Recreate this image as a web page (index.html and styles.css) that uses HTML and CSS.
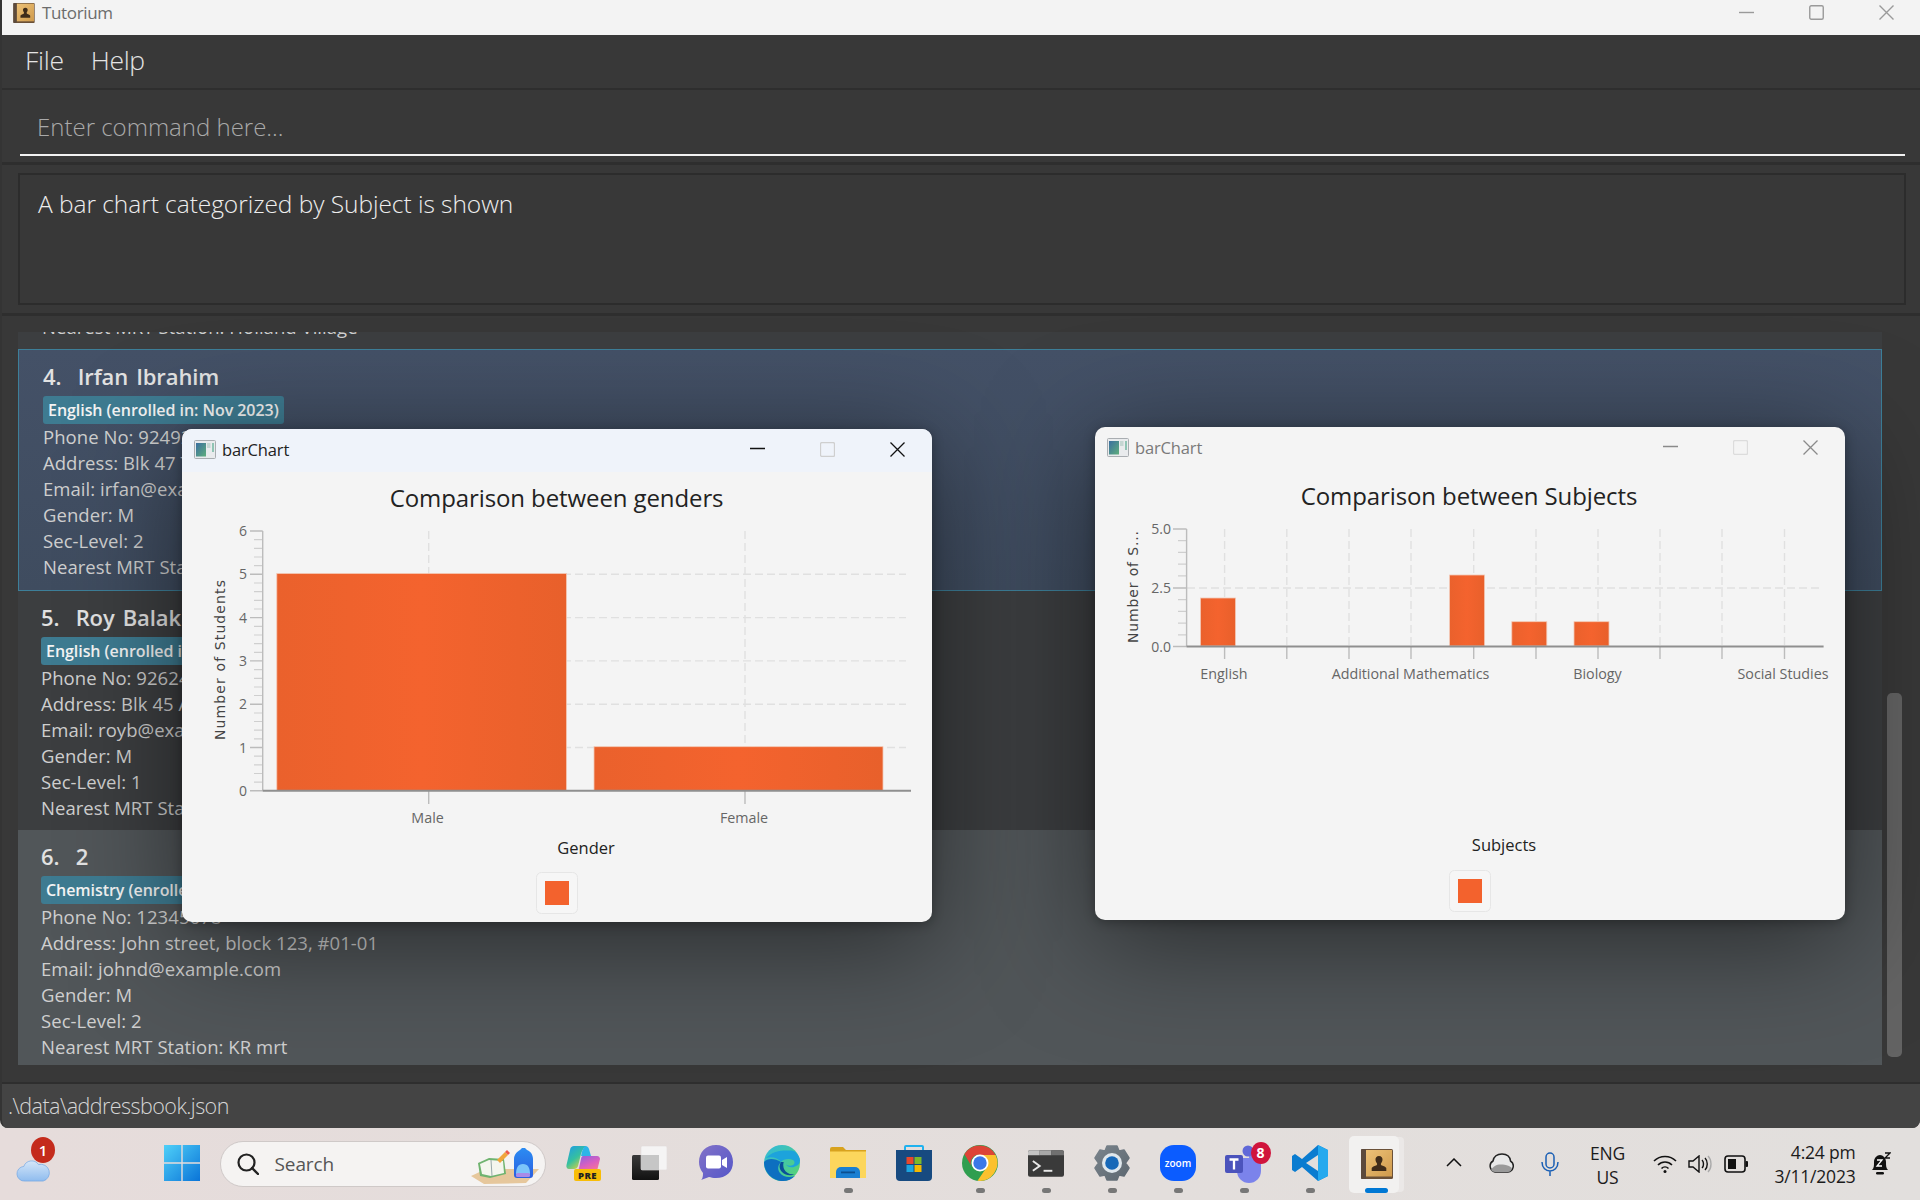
FILE: index.html
```html
<!DOCTYPE html>
<html lang="en">
<head>
<meta charset="utf-8">
<title>Tutorium</title>
<link rel="stylesheet" href="styles.css">
</head>
<body>
<svg class="defs" width="0" height="0" aria-hidden="true">
  <defs>
    <linearGradient id="barFill" x1="0" x2="1" y1="0" y2="0">
      <stop offset="0" stop-color="#ea612c"/><stop offset=".5" stop-color="#f4632e"/><stop offset="1" stop-color="#e8602b"/>
    </linearGradient>
    <linearGradient id="bookFill" x1="0" x2="1" y1="0" y2="1">
      <stop offset="0" stop-color="#edc278"/><stop offset="1" stop-color="#cf9a4c"/>
    </linearGradient>
    <linearGradient id="winBlock" x1="0" x2="1" y1="0" y2="1">
      <stop offset="0" stop-color="#3b6ea0"/><stop offset="1" stop-color="#5fae7c"/>
    </linearGradient>
    <symbol id="book" viewBox="0 0 32 30">
      <rect x="0" y="0" width="32" height="30" rx="1.500" fill="#6a5038"/>
      <rect x="5" y="1" width="26" height="26.500" fill="url(#bookFill)"/>
      <rect x="0" y="0" width="5" height="30" rx="1" fill="#5c4a3c"/>
      <path d="M18 7c2.400 0 3.800 1.700 3.500 4-.2 1.500-.9 2.600-1.500 3.400-.3.900 0 1.600 1 2.100 1.900.8 3.600 1.100 4.300 2.500v3H10.700v-3c.7-1.400 2.400-1.700 4.300-2.500 1-.5 1.300-1.200 1-2.100-.6-.8-1.300-1.900-1.500-3.400C14.200 8.700 15.600 7 18 7z" fill="#3f2c1a"/>
    </symbol>
    <symbol id="winIcon" viewBox="0 0 22 19">
      <rect x=".5" y=".5" width="21" height="18" rx="1" fill="#e9ebed" stroke="#a9adb1"/>
      <rect x="2" y="3" width="10" height="13.500" fill="url(#winBlock)"/>
      <rect x="13" y="3" width="3.500" height="5" fill="#c4d6d2"/>
      <rect x="18" y="3" width="2" height="9" fill="#8fc4b4"/>
    </symbol>
  </defs>
</svg>

<main class="app">
  <header class="titlebar">
    <svg class="titlebar-icon"><use href="#book"/></svg>
    <span class="titlebar-name">Tutorium</span>
    <div class="wincontrols">
      <svg class="wc" viewBox="0 0 15 15"><path d="M0 7.500h15"/></svg>
      <svg class="wc" viewBox="0 0 15 15"><rect x=".75" y=".75" width="13.500" height="13.500" rx="1.500"/></svg>
      <svg class="wc" viewBox="0 0 15 15"><path d="M.5.500l14 14M14.500.500l-14 14"/></svg>
    </div>
  </header>

  <nav class="menubar"><span>File</span><span>Help</span></nav>

  <section class="command">
    <div class="command-input">Enter command here...</div>
  </section>

  <section class="result">
    <div class="result-box">A bar chart categorized by Subject is shown</div>
  </section>

  <section class="listpanel">
    <div class="cards">
      <div class="stripe"><div class="line stripe-line">Nearest MRT Station: Holland Village</div></div>

      <article class="card card-selected">
        <div class="name">4.&nbsp;&nbsp;Irfan Ibrahim</div>
        <div class="tag">English (enrolled in: Nov 2023)</div>
        <div class="line">Phone No: 92492021</div>
        <div class="line">Address: Blk 47 Tampines Street 20, #17-35</div>
        <div class="line">Email: irfan@example.com</div>
        <div class="line">Gender: M</div>
        <div class="line">Sec-Level: 2</div>
        <div class="line">Nearest MRT Station: Tampines</div>
      </article>

      <article class="card card-odd">
        <div class="name">5.&nbsp;&nbsp;Roy Balakrishnan</div>
        <div class="tag">English (enrolled in: Nov 2023)</div>
        <div class="line">Phone No: 92624417</div>
        <div class="line">Address: Blk 45 Aljunied Street 85, #11-31</div>
        <div class="line">Email: royb@example.com</div>
        <div class="line">Gender: M</div>
        <div class="line">Sec-Level: 1</div>
        <div class="line">Nearest MRT Station: Aljunied</div>
      </article>

      <article class="card card-even">
        <div class="name">6.&nbsp;&nbsp;2</div>
        <div class="tag">Chemistry (enrolled in: Nov 2023)</div>
        <div class="line">Phone No: 12345678</div>
        <div class="line">Address: John street, block 123, #01-01</div>
        <div class="line">Email: johnd@example.com</div>
        <div class="line">Gender: M</div>
        <div class="line">Sec-Level: 2</div>
        <div class="line">Nearest MRT Station: KR mrt</div>
      </article>
    </div>
    <div class="scrolltrack"><div class="scrollthumb"></div></div>
  </section>

  <footer class="statusbar">.\data\addressbook.json</footer>
</main>

<section class="chartwin chartwin-active">
  <div class="chart-titlebar">
    <svg class="chart-icon"><use href="#winIcon"/></svg>
    <span class="chart-name">barChart</span>
    <div class="chart-controls">
      <svg class="cc" viewBox="0 0 15 15"><path d="M0 6.500h15"/></svg>
      <svg class="cc cc-dim" viewBox="0 0 15 15"><rect x=".5" y=".5" width="14" height="14" rx="1.500"/></svg>
      <svg class="cc" viewBox="0 0 15 15"><path d="M.5.500l14 14M14.500.500l-14 14"/></svg>
    </div>
  </div>
  <svg class="plot" viewBox="0 0 750 450">
    <text class="t-title" x="374.600" y="35">Comparison between genders</text>
    <g class="grid">
      <path d="M246.700 59V102M563 59V275M381 102.300H724M381 145.600H724M381 188.900H724M381 232.200H724M381 275.500H724"/>
    </g>
    <rect class="bar" x="94.800" y="101.500" width="289.700" height="217"/>
    <rect class="bar" x="412" y="274.700" width="289" height="43.800"/>
    <path class="minor" d="M72 67.700h8M72 76.300h8M72 85h8M72 93.700h8M72 111h8M72 119.600h8M72 128.300h8M72 137h8M72 154.300h8M72 163h8M72 171.600h8M72 180.300h8M72 197.600h8M72 206.300h8M72 215h8M72 223.500h8M72 241h8M72 249.500h8M72 258.200h8M72 266.800h8M72 284.200h8M72 292.800h8M72 301.500h8M72 310.100h8"/>
    <path class="major" d="M68 59h12.700M68 102.300h12.700M68 145.600h12.700M68 188.900h12.700M68 232.200h12.700M68 275.500h12.700M68 318.800h12.700M80.700 59V319M246.700 319V332M563 319V332"/>
    <path class="axis" d="M80.700 318.800H729"/>
    <g class="t-ytick">
      <text x="65" y="64">6</text><text x="65" y="107">5</text><text x="65" y="150.600">4</text><text x="65" y="194">3</text><text x="65" y="237">2</text><text x="65" y="280.500">1</text><text x="65" y="324">0</text>
    </g>
    <g class="t-xtick">
      <text x="245.600" y="351">Male</text><text x="562" y="351">Female</text>
    </g>
    <text class="t-axis" x="404" y="382">Gender</text>
    <text class="t-yaxis" transform="translate(42.500 188) rotate(-90)" textLength="160" lengthAdjust="spacing">Number of Students</text>
    <rect class="legend-box" x="354.500" y="400.500" width="41" height="41" rx="5"/>
    <rect class="legend-swatch" x="363" y="409" width="24" height="24"/>
  </svg>
</section>

<section class="chartwin chartwin-inactive">
  <div class="chart-titlebar">
    <svg class="chart-icon"><use href="#winIcon"/></svg>
    <span class="chart-name">barChart</span>
    <div class="chart-controls">
      <svg class="cc" viewBox="0 0 15 15"><path d="M0 6.500h15"/></svg>
      <svg class="cc cc-dim" viewBox="0 0 15 15"><rect x=".5" y=".5" width="14" height="14" rx="1.500"/></svg>
      <svg class="cc" viewBox="0 0 15 15"><path d="M.5.500l14 14M14.500.500l-14 14"/></svg>
    </div>
  </div>
  <svg class="plot" viewBox="0 0 750 450">
    <text class="t-title" x="374" y="35">Comparison between Subjects</text>
    <g class="grid">
      <path d="M129.600 59V176M191.800 59V176M254 59V176M316 59V176M378.700 59V176M441 59V176M503 59V176M565 59V176M627 59V176M689.500 59V176M92 118H724"/>
    </g>
    <rect class="bar" x="105.500" y="128" width="35" height="48"/>
    <rect class="bar" x="354.600" y="105" width="35" height="71"/>
    <rect class="bar" x="416.800" y="151.700" width="35" height="24.300"/>
    <rect class="bar" x="479" y="151.700" width="35" height="24.300"/>
    <path class="minor" d="M83 70.700h8.600M83 82.400h8.600M83 94.100h8.600M83 105.800h8.600M83 129.700h8.600M83 141.400h8.600M83 153.100h8.600M83 164.800h8.600"/>
    <path class="major" d="M78 59h13.600M78 118h13.600M78 176.500h13.600M91.600 59V177M129.600 177V189M191.800 177V189M254 177V189M316 177V189M378.700 177V189M441 177V189M503 177V189M565 177V189M627 177V189M689.500 177V189"/>
    <path class="axis" d="M91.600 176.500H728.600"/>
    <g class="t-ytick">
      <text x="76" y="64">5.0</text><text x="76" y="123">2.5</text><text x="76" y="181.500">0.0</text>
    </g>
    <g class="t-xtick">
      <text x="129" y="209">English</text><text x="315.500" y="209">Additional Mathematics</text><text x="502.500" y="209">Biology</text><text x="688" y="209">Social Studies</text>
    </g>
    <text class="t-axis" x="409" y="381">Subjects</text>
    <text class="t-yaxis" transform="translate(42.500 117) rotate(-90)" textLength="112" lengthAdjust="spacing">Number of S...</text>
    <rect class="legend-box" x="354.500" y="400.500" width="41" height="41" rx="5"/>
    <rect class="legend-swatch" x="363" y="409" width="24" height="24"/>
  </svg>
</section>

<footer class="taskbar">
  <div class="weather">
    <svg class="ic-weather" viewBox="0 0 36 24"><defs><linearGradient id="cloud" x1="0" y1="0" x2="0" y2="1"><stop offset="0" stop-color="#d5e6f8"/><stop offset="1" stop-color="#8fbcee"/></linearGradient></defs><path d="M9 23a8 8 0 0 1-1-16 9 9 0 0 1 16-2 7 7 0 0 1 5 18z" fill="url(#cloud)" stroke="#6ba3e4" stroke-width=".7"/></svg>
    <span class="weather-badge">1</span>
  </div>

  <div class="slot slot-start">
    <svg class="ic" viewBox="0 0 36 36"><defs><linearGradient id="win" x1="0" y1="0" x2="1" y2="1"><stop offset="0" stop-color="#4fd0f8"/><stop offset="1" stop-color="#0a74d8"/></linearGradient></defs><path fill="url(#win)" d="M0 0h17.300v17.300H0zM18.700 0H36v17.300H18.700zM0 18.700h17.300V36H0zM18.700 18.700H36V36H18.700z"/></svg>
  </div>

  <div class="search">
    <svg class="ic-search" viewBox="0 0 22 22"><circle cx="9.500" cy="9.500" r="8" fill="none" stroke="#222" stroke-width="2.200"/><path d="M15 15l6 6" stroke="#222" stroke-width="2.400" stroke-linecap="round"/></svg>
    <span class="search-text">Search</span>
    <svg class="ic-searchart" viewBox="0 0 70 38">
      <defs><linearGradient id="bag" x1="0" y1="0" x2="0" y2="1"><stop offset="0" stop-color="#2c8cf2"/><stop offset="1" stop-color="#2b5fe0"/></linearGradient></defs>
      <path d="M1 29L16 22H62L69 22 56 36 14 37z" fill="#e6c79c"/>
      <path d="M8 16l11-5 15 1 2 15-16 4-10-2z" fill="#6fb36f"/>
      <path d="M10 17l9-4 14 1 1 12-13 3-9-2z" fill="#f4f6ee"/>
      <path d="M21 13l1 16" stroke="#9aa" fill="none"/>
      <path d="M27 13l8-8 3 3-8 8z" fill="#f0a63c"/>
      <path d="M35 5l2-2 3 3-2 2z" fill="#ee5a4a"/>
      <path d="M44 28V12c0-5 4-8 6-9l2-2h3l2 2c3 1 6 4 6 9v16c0 2-1 3-3 3H47c-2 0-3-1-3-3z" fill="url(#bag)"/>
      <path d="M46 27c0-6 2-10 7-10s7 4 7 10z" fill="#7cc4fa"/>
      <rect x="46" y="26" width="14" height="4" rx="1.500" fill="#a88be8"/>
    </svg>
  </div>

  <div class="slot">
    <svg class="ic ic-copilot" viewBox="0 0 36 36">
      <defs>
        <linearGradient id="cop1" x1="0" y1="0" x2=".7" y2="1"><stop offset="0" stop-color="#1e9be8"/><stop offset=".55" stop-color="#35c0a0"/><stop offset="1" stop-color="#e2d23a"/></linearGradient>
        <linearGradient id="cop2" x1="0" y1="0" x2=".6" y2="1"><stop offset="0" stop-color="#8a62e0"/><stop offset=".6" stop-color="#d95fc0"/><stop offset="1" stop-color="#f4739a"/></linearGradient>
      </defs>
      <path d="M8 1h13c-3 1-5 4-6 8l-3 12c-.5 2-2 3-4 3H3C1 24 0 22 .5 20L4 5c.5-3 2-4 4-4z" fill="url(#cop1)"/>
      <path d="M19 1c2 0 3.500 1 4 3l2 7H15c1-5 2-8 4-10z" fill="#2cb5e8"/>
      <path d="M17 11h14c2 0 3 1.500 3 3l-3 12H14c-1 0-2-1-1-3l2-9c.3-2 1-3 2-3z" fill="url(#cop2)"/>
      <rect x="8" y="24" width="27" height="12" rx="2" fill="#f8bd07"/>
      <text class="pre" x="21.500" y="33.500">PRE</text>
    </svg>
  </div>
  <div class="slot">
    <svg class="ic" viewBox="0 0 36 34"><defs><linearGradient id="blk" x1="0" y1="0" x2="0" y2="1"><stop offset="0" stop-color="#3a3a3a"/><stop offset="1" stop-color="#111"/></linearGradient></defs><rect x="0" y="9" width="27" height="25" rx="1.500" fill="url(#blk)"/><rect x="9" y="0" width="26" height="24" rx="1.500" fill="#f5f4f4" stroke="#e0dcdc" stroke-width=".6"/><rect x="9" y="9" width="18" height="15" fill="#c6c6c6"/></svg>
  </div>
  <div class="slot">
    <svg class="ic" viewBox="0 0 34 36"><defs><linearGradient id="meet" x1="0" y1="0" x2="1" y2="1"><stop offset="0" stop-color="#8272c8"/><stop offset="1" stop-color="#5456c8"/></linearGradient></defs><path d="M17 0c10 0 17 7 17 17s-7 16-17 16c-3 0-5-.5-7-1l-8 3 1-1c1-2 1-5 1-6C1 24 0 21 0 17 0 7 7 0 17 0z" fill="url(#meet)"/><rect x="7" y="10.500" width="15" height="13" rx="2" fill="#fff"/><path d="M23 15l5-3v11l-5-3z" fill="#fff"/></svg>
  </div>
  <div class="slot">
    <svg class="ic" viewBox="0 0 36 36"><defs><linearGradient id="edge1" x1="0" y1="0" x2="1" y2="1"><stop offset="0" stop-color="#2fb8e0"/><stop offset="1" stop-color="#5ad66a"/></linearGradient></defs><circle cx="18" cy="18" r="18" fill="url(#edge1)"/><path d="M0 17c0 11 9 19 19 19 5 0 9-2 12-5-6 2-12 1-15-3-3-4-2-8 1-11C11 13 3 13 0 17z" fill="#0d6fc0"/><path d="M17 17c2-3 8-4 12-2 2 1 2 4 0 5-2 1-5 1-7-.5 1 2 5 4 9 2 3-1 5-3 5-6 0-3-2-6-5-9-2-1-3-1-5-1C18 5 8 6 2 13c6-2 12 0 15 4z" fill="#1da3dc"/><path d="M17 17c-2 3-2 7 1 10 4 4 9 4 13 2-5 1-9-1-11-5-.8-2-1-5-.3-7z" fill="#0a4f98"/></svg>
  </div>
  <div class="slot slot-dot">
    <svg class="ic" viewBox="0 0 36 34"><path d="M0 3a2 2 0 0 1 2-2h11l3 3h20v28H0z" fill="#d8a21e"/><rect x="0" y="5.500" width="36" height="26.500" fill="#fcd65c"/><path d="M6 32v-6a5 5 0 0 1 5-5h14a5 5 0 0 1 5 5v6z" fill="#1a7fd2"/><rect x="11" y="25.500" width="14" height="1.800" fill="#0b4f90"/></svg>
  </div>
  <div class="slot">
    <svg class="ic" viewBox="0 0 36 36"><path d="M8 5V2a2 2 0 0 1 2-2h16a2 2 0 0 1 2 2v3h-2V2H10v3z" fill="#1fb2ef"/><path d="M0 5h36v27a4 4 0 0 1-4 4H4a4 4 0 0 1-4-4z" fill="#174a80"/><rect x="10.500" y="12" width="7" height="7" fill="#e8472b"/><rect x="18.500" y="12" width="7" height="7" fill="#7db829"/><rect x="10.500" y="20" width="7" height="7" fill="#1ca5e0"/><rect x="18.500" y="20" width="7" height="7" fill="#f5b800"/></svg>
  </div>
  <div class="slot slot-dot">
    <svg class="ic" viewBox="0 0 36 36"><circle cx="18" cy="18" r="18" fill="#2f9e4f"/><path d="M18 10h15.600A18 18 0 0 0 2.400 9l7.800 13.500A8 8 0 0 1 18 10z" fill="#dc4437"/><path d="M33.600 10H18a8 8 0 0 1 6.900 12L15.500 35.800A18 18 0 0 0 33.600 10z" fill="#fbc12e"/><circle cx="18" cy="18" r="8.500" fill="#fff"/><circle cx="18" cy="18" r="6.700" fill="#3b78e7"/></svg>
  </div>
  <div class="slot slot-dot">
    <svg class="ic ic-wide" viewBox="0 0 37 27"><path d="M2 0h33a2 2 0 0 1 2 2v23a2 2 0 0 1-2 2H2a2 2 0 0 1-2-2V2a2 2 0 0 1 2-2z" fill="#3a3a3a"/><path d="M2 0h10v5H0V2a2 2 0 0 1 2-2z" fill="#c4c4c4"/><path d="M12 0h12v5H12z" fill="#a8a8a8"/><path d="M24 0h11a2 2 0 0 1 2 2v3H24z" fill="#707070"/><path d="M5 11l7 5-7 5" fill="none" stroke="#e8e8e8" stroke-width="2"/><rect x="16" y="20" width="9" height="2" fill="#e8e8e8"/></svg>
  </div>
  <div class="slot slot-dot">
    <svg class="ic" viewBox="0 0 36 36">
      <defs><linearGradient id="gear" x1="0" y1="0" x2="1" y2="1"><stop offset="0" stop-color="#7a848c"/><stop offset="1" stop-color="#5c6770"/></linearGradient></defs>
      <path d="M13 1h10l2 5 5-1 5 8-3.500 5 3.500 5-5 8-5-1-2 5H13l-2-5-5 1-5-8 3.500-5L1 13l5-8 5 1z" fill="url(#gear)" stroke="url(#gear)" stroke-width="1.500" stroke-linejoin="round"/>
      <circle cx="18" cy="18" r="10" fill="#dfe7ec"/><circle cx="18" cy="18" r="6.800" fill="#1668b8"/>
    </svg>
  </div>
  <div class="slot slot-dot">
    <svg class="ic" viewBox="0 0 36 36"><rect width="36" height="36" rx="14" fill="#0b5cff"/><text class="zoomtxt" x="18" y="21.500">zoom</text></svg>
  </div>
  <div class="slot slot-dot">
    <svg class="ic ic-teams" viewBox="0 0 44 40"><circle cx="31" cy="14" r="6" fill="#7b83eb"/><path d="M13 15h24v13a12 12 0 0 1-24 0z" fill="#7b83eb"/><circle cx="24" cy="8" r="5.500" fill="#6068d8"/><rect x="1" y="12" width="18" height="18" rx="2" fill="#4b53bc"/><path d="M5.500 16.500h9M10 16.500v10" stroke="#fff" stroke-width="2.300" fill="none"/></svg>
    <span class="teams-badge">8</span>
  </div>
  <div class="slot slot-dot">
    <svg class="ic" viewBox="0 0 36 36"><path d="M26 0l10 5v26l-10 5-16-14-7 5-3-2V11l3-2 7 5z" fill="#0a7cd0"/><path d="M26 0l10 5v26l-10 5z" fill="#25a9ee"/><path d="M26 10L14 18l12 8z" fill="#e2dfdd"/></svg>
  </div>
  <div class="slot slot-active">
    <div class="active-tile">
      <svg class="ic-book"><use href="#book"/></svg>
      <span class="active-bar"></span>
    </div>
  </div>

  <div class="tray">
    <svg class="tr-chevron" viewBox="0 0 16 9"><path d="M1 8l7-7 7 7" fill="none" stroke="#111" stroke-width="1.500"/></svg>
    <svg class="tr-cloud" viewBox="0 0 26 20"><path d="M7 19a6 6 0 0 1-2-11C6 3 10 1 14 1c5 0 8 3 8.500 7A6 6 0 0 1 20 19z" fill="#e8e8e8" stroke="#222" stroke-width="1.500"/><path d="M3 17c3-5 8-7 18-4l3 2c-1 3-2 4-4 4H7c-2 0-3-1-4-2z" fill="#9a9a9a"/></svg>
    <svg class="tr-mic" viewBox="0 0 20 24"><rect x="6" y="1" width="8" height="15" rx="4" fill="none" stroke="#1a5fb4" stroke-width="1.500"/><path d="M2 10c0 12 16 12 16 0M10 19v5" fill="none" stroke="#1a5fb4" stroke-width="1.500"/></svg>
    <div class="tr-lang"><span>ENG</span><span>US</span></div>
    <svg class="tr-wifi" viewBox="0 0 24 18"><path d="M1 6c6-6 16-6 22 0M5 10c4-4 10-4 14 0M8.500 13.500c2-2 5-2 7 0" fill="none" stroke="#111" stroke-width="1.600"/><circle cx="12" cy="16.500" r="1.500" fill="#111"/></svg>
    <svg class="tr-speaker" viewBox="0 0 24 18"><path d="M1 6h4l6-5v16l-6-5H1z" fill="none" stroke="#111" stroke-width="1.400"/><path d="M14 5c2 2 2 6 0 8M17 3c3 3 3 9 0 12" fill="none" stroke="#111" stroke-width="1.400"/><path d="M20 1c4 4 4 12 0 16" fill="none" stroke="#aaa" stroke-width="1.400"/></svg>
    <svg class="tr-battery" viewBox="0 0 24 18"><rect x="1" y="1" width="20" height="16" rx="3" fill="none" stroke="#111" stroke-width="1.600"/><rect x="4" y="4" width="8" height="10" fill="#111"/><rect x="21.500" y="6" width="2.500" height="6" rx="1" fill="#111"/></svg>
    <div class="tr-clock"><span>4:24 pm</span><span>3/11/2023</span></div>
    <svg class="tr-bell" viewBox="0 0 21 24"><path d="M2 18c2-2 2-4 2-8 0-4 3-7 6-7s6 3 6 7c0 4 0 6 2 8z" fill="#111"/><rect x="6" y="20" width="8" height="2.500" rx="1.200" fill="#111"/><path d="M7 8h5l-5 6h5" fill="none" stroke="#fff" stroke-width="1.300"/><path d="M15 1h5l-5 5h5" fill="none" stroke="#111" stroke-width="1.300"/></svg>
  </div>
</footer>
</body>
</html>
```

FILE: styles.css
```css
* { box-sizing: border-box; }
html, body { margin: 0; padding: 0; }
body {
  width: 1920px;
  height: 1200px;
  overflow: hidden;
  position: relative;
  display: flex;
  flex-direction: column;
  background: #e3dedc;
  font-family: "Open Sans", "Noto Sans", "Liberation Sans", sans-serif;
}
.defs { position: absolute; }

/* main window */
.app {
  height: 1128px;
  display: flex;
  flex-direction: column;
  background: #383838;
  border-left: 2px solid #343434;
  border-radius: 0 0 8px 8px;
  overflow: hidden;
  flex: none;
}
.titlebar {
  height: 35px;
  flex: none;
  margin-left: -2px;
  padding-left: 13px;
  display: flex;
  align-items: center;
  background: #f3f3f3;
}
.titlebar-icon { width: 22px; height: 20px; margin-top: -10px; }
.titlebar-name { margin: -10px 0 0 7px; font-size: 17px; letter-spacing: -.35px; color: #6c6c6c; }
.wincontrols { margin-left: auto; display: flex; gap: 55px; padding-right: 26px; margin-top: -10px; }
.wc { width: 15px; height: 15px; fill: none; stroke: #9a9a9a; stroke-width: 1.400; }

.menubar {
  height: 55px;
  flex: none;
  display: flex;
  align-items: center;
  gap: 27px;
  padding: 0 0 3px 23px;
  border-bottom: 2px solid #2e2e2e;
  font-size: 26.500px;
  font-weight: 300;
  letter-spacing: -.3px;
  color: #e4e4e4;
}
.command {
  height: 75px;
  flex: none;
  padding: 0 15px 0 18px;
  border-bottom: 3px solid #2e2e2e;
}
.command-input {
  height: 66px;
  padding: 20px 0 0 17px;
  border-bottom: 2px solid #f2f2f2;
  font-size: 24px;
  line-height: 33px;
  font-weight: 300;
  letter-spacing: 0;
  color: #a9a9a9;
}
.result {
  height: 151px;
  flex: none;
  padding: 8px 14px 0 16px;
  border-bottom: 3px solid #2e2e2e;
}
.result-box {
  height: 132px;
  padding: 12px 0 0 18px;
  border: 2px solid #2c2c2c;
  font-size: 24.500px;
  line-height: 34px;
  font-weight: 300;
  letter-spacing: -.05px;
  color: #eeeeee;
}

/* list */
.listpanel {
  flex: 1;
  min-height: 0;
  display: flex;
  padding: 16px 0 0 16px;
}
.cards { width: 1864px; display: flex; flex-direction: column; }
.stripe { height: 17px; flex: none; overflow: hidden; background: #3c3e40; padding-left: 24px; }
.stripe-line { margin-top: -18px; }
.card { padding: 12px 0 0 23px; flex: none; }
.card-selected { height: 242px; background: linear-gradient(180deg, #445167, #3f4c5f); border: 1px solid #3d7f99; padding: 12px 0 0 24px; }
.card-odd { height: 239px; background: #3c3e40; }
.card-even { height: 235px; background: #515659; }
.name {
  height: 30px;
  margin-bottom: 4px;
  font-size: 22px;
  line-height: 28px;
  font-weight: 600;
  letter-spacing: -.1px;
  word-spacing: 2.500px;
  color: #e2e2e2;
}
.tag {
  width: max-content;
  height: 28px;
  padding: 0 5px;
  border-radius: 3px;
  background: #3e7b91;
  font-size: 16px;
  line-height: 28px;
  font-weight: 600;
  letter-spacing: -.05px;
  color: #f4f4f4;
}
.line {
  height: 26px;
  font-size: 18.500px;
  line-height: 26px;
  letter-spacing: .05px;
  color: #cfcfcf;
  white-space: nowrap;
}
.scrolltrack { width: 15px; margin-left: 5px; }
.scrollthumb { height: 364px; margin-top: 361px; border-radius: 5px; background: #636363; }

.statusbar {
  height: 46px;
  flex: none;
  padding-left: 6px;
  background: #444444;
  border-top: 2px solid #2e2e2e;
  font-size: 21.500px;
  line-height: 44px;
  font-weight: 300;
  letter-spacing: -.55px;
  color: #d6d6d6;
}

/* chart windows: floating windows on the desktop */
.chartwin {
  position: absolute;
  width: 750px;
  height: 493px;
  background: #f4f4f4;
  border-radius: 10px;
  overflow: hidden;
  box-shadow: 0 20px 110px rgba(0, 0, 0, .5), 0 2px 12px rgba(0, 0, 0, .3);
  display: flex;
  flex-direction: column;
}
.chartwin-active { left: 182px; top: 429px; z-index: 2; }
.chartwin-inactive { left: 1095px; top: 427px; z-index: 1; }
.chart-titlebar { height: 43px; flex: none; display: flex; align-items: center; padding: 0 27px 2px 12px; }
.chartwin-active .chart-titlebar { background: #eff3fa; }
.chart-icon { width: 22px; height: 19px; }
.chart-name { margin-left: 6px; font-size: 16.500px; letter-spacing: -.15px; color: #222; }
.chartwin-inactive .chart-name { color: #7a7a7a; }
.chart-controls { margin-left: auto; display: flex; gap: 55px; }
.cc { width: 15px; height: 15px; fill: none; stroke: #111; stroke-width: 1.300; }
.cc-dim { stroke: #cfcfcf; }
.chartwin-inactive .cc { stroke: #8a8a8a; }
.chartwin-inactive .cc-dim { stroke: #dcdcdc; }
.plot { width: 750px; height: 450px; display: block; font-family: "Open Sans", "Noto Sans", sans-serif; }
.grid path { fill: none; stroke: #e0e0e0; stroke-width: 1.400; stroke-dasharray: 8 4; }
.bar { fill: url(#barFill); stroke: #f3c9b6; stroke-width: .8; }
.minor { fill: none; stroke: #cfcfcf; stroke-width: 1.200; }
.major { fill: none; stroke: #bcbcbc; stroke-width: 1.400; }
.axis { fill: none; stroke: #8f8f8f; stroke-width: 2; }
.t-title { font-size: 24px; letter-spacing: -.1px; fill: #222; text-anchor: middle; }
.t-ytick text { font-size: 14px; fill: #666; text-anchor: end; }
.t-xtick text { font-size: 14.300px; fill: #666; text-anchor: middle; }
.t-axis { font-size: 16.500px; fill: #222; text-anchor: middle; }
.t-yaxis { font-family: "DejaVu Sans", sans-serif; font-size: 14px; fill: #444; text-anchor: middle; }
.legend-box { fill: #f6f6f6; stroke: #e6e6e6; }
.legend-swatch { fill: #f3622d; }

/* taskbar */
.taskbar {
  height: 72px;
  flex: none;
  display: flex;
  position: relative;
  background: linear-gradient(90deg, #e6dcdb, #e3dedc 60%, #e2dfdd);
}
.weather { width: 148.500px; flex: none; position: relative; }
.ic-weather { position: absolute; left: 15px; top: 32px; width: 36px; height: 22px; }
.weather-badge {
  position: absolute;
  left: 31px;
  top: 9px;
  width: 24px;
  height: 26px;
  border-radius: 50%;
  background: #c42b1c;
  color: #fff;
  font-size: 15px;
  font-weight: 600;
  line-height: 26px;
  text-align: center;
}
.slot { width: 66px; flex: none; position: relative; display: flex; justify-content: center; align-items: center; height: 72px; }
.slot-start { width: 66px; margin-right: 5px; }
.ic { width: 36px; height: 36px; margin-top: -2px; }
.ic-wide { height: 27px; }
.ic-teams { width: 44px; height: 40px; margin-left: 4px; }
.slot-dot::after {
  content: "";
  position: absolute;
  left: 29px;
  top: 60px;
  width: 9px;
  height: 5px;
  border-radius: 3px;
  background: #777;
}
.pre { font-size: 9.500px; font-weight: 800; fill: #222; text-anchor: middle; letter-spacing: .5px; }
.zoomtxt { font-size: 10px; font-weight: 600; fill: #fff; text-anchor: middle; }
.teams-badge {
  position: absolute;
  left: 40px;
  top: 14px;
  width: 20px;
  height: 22px;
  border-radius: 50%;
  background: #d0143c;
  color: #fff;
  font-size: 14px;
  font-weight: 700;
  line-height: 22px;
  text-align: center;
}
.search {
  width: 326px;
  height: 46px;
  flex: none;
  margin: 13px 5px 0 0;
  padding-left: 16px;
  display: flex;
  align-items: center;
  border-radius: 23px;
  background: #f5f3f2;
  border: 1px solid #cfc9c8;
  position: relative;
}
.ic-search { width: 22px; height: 22px; }
.search-text { margin-left: 16px; font-size: 19px; letter-spacing: -.1px; color: #555; }
.ic-searchart { position: absolute; right: 5px; top: 5px; width: 70px; height: 38px; }
.slot-active { width: 66px; }
.active-tile {
  position: absolute;
  left: 6px;
  top: 8px;
  width: 50px;
  height: 57px;
  border-radius: 5px;
  background: #f2f1f0;
  box-shadow: 6px 0 0 -1px #ebe8e7;
}
.ic-book { display: block; width: 32px; height: 30px; margin: 13px 0 0 12px; }
.active-bar { position: absolute; left: 16px; bottom: 0; width: 23px; height: 5px; border-radius: 3px; background: #0078d4; }

.tray { flex: 1; display: flex; align-items: center; height: 72px; position: relative; }
.tr-chevron { width: 16px; height: 9px; margin-left: 37px; margin-top: -4px; }
.tr-cloud { width: 26px; height: 20px; margin-left: 26px; margin-top: -2px; }
.tr-mic { width: 20px; height: 24px; margin-left: 26px; }
.tr-lang {
  width: 60px;
  margin: 2px 0 0 18px;
  display: flex;
  flex-direction: column;
  align-items: center;
  font-size: 17.500px;
  line-height: 24px;
  letter-spacing: -.2px;
  color: #1b1b1b;
}
.tr-wifi { width: 24px; height: 18px; margin-left: 15px; }
.tr-speaker { width: 24px; height: 18px; margin-left: 11px; }
.tr-battery { width: 24px; height: 18px; margin-left: 12px; }
.tr-clock {
  width: 90px;
  margin-left: 18px;
  display: flex;
  flex-direction: column;
  align-items: flex-end;
  font-size: 17.500px;
  line-height: 24px;
  letter-spacing: -.2px;
  color: #1b1b1b;
}
.tr-bell { width: 21px; height: 24px; margin-left: 14px; }
```
